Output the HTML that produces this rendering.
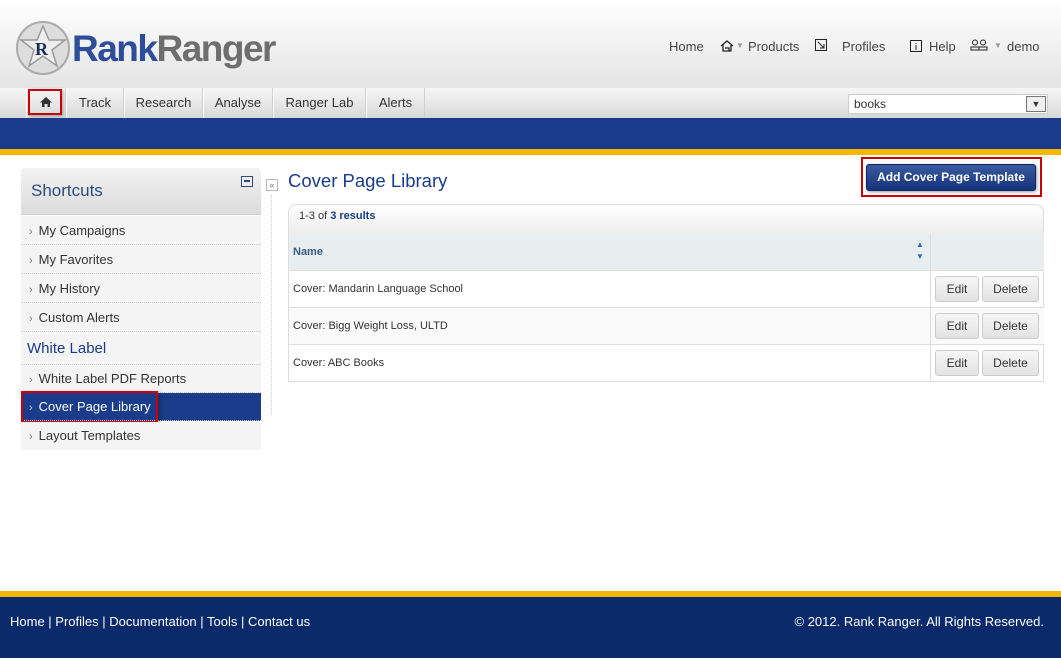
<!DOCTYPE html>
<html><head><style>
*{margin:0;padding:0;box-sizing:border-box}
body{width:1061px;height:658px;position:relative;font-family:"Liberation Sans",sans-serif;background:#fff;overflow:hidden;color:#333}
.abs{position:absolute}
#hdr{left:0;top:0;width:1061px;height:88px;background:linear-gradient(#fff,#e4e4e4)}
#nav{left:0;top:88px;width:1061px;height:30px;background:linear-gradient(#f6f6f6,#d9d9d9)}
.tab{position:absolute;top:0;height:30px;border-left:1px solid #fff;border-right:1px solid #d0d0d0;font-size:13px;color:#333;text-align:center;line-height:29px}
#blue{left:0;top:118px;width:1061px;height:31px;background:#1a3c8a}
#yel{left:0;top:149px;width:1061px;height:6px;background:#f7b700}
.toplink{position:absolute;top:39px;font-size:13px;color:#444;white-space:nowrap}
.side{position:absolute;left:21px;width:240px;background:#f4f4f4;border-bottom:1px dotted #ccc;font-size:13px;color:#333}
.side span.ar{color:#777;font-size:11px;margin:0 6px 0 8px}
.row{position:absolute;left:289px;width:755px;border-bottom:1px solid #ddd;font-size:11px;color:#333}
.btn{position:absolute;height:26px;border:1px solid #ccc;border-radius:3px;background:linear-gradient(#f6f6f6,#e3e3e3);font-size:12px;color:#333;text-align:center;line-height:24px}
#foot{left:0;top:597px;width:1061px;height:61px;background:#0a2a6b;color:#fff;font-size:13px}
</style></head><body>
<div id="hdr" class="abs"></div>
<svg class="abs" style="left:15px;top:20px" width="56" height="56" viewBox="0 0 56 56">
<circle cx="28" cy="28" r="26" fill="#ddd" stroke="#aaa" stroke-width="2"/>
<polygon points="28,6 34,20 50,20 37,30 42,46 28,36 14,46 19,30 6,20 22,20" fill="#eee" stroke="#999" stroke-width="1.5"/>
<text x="20" y="35" font-family="Liberation Serif" font-weight="bold" font-size="18" fill="#1a2a5a">R</text></svg>
<div class="abs" style="left:72px;top:25px;font-family:'Liberation Sans',sans-serif;font-size:37px;font-weight:bold;letter-spacing:-1.5px;line-height:48px"><span style="color:#2d4c9a">Rank</span><span style="color:#6e6e6e">Ranger</span></div>
<div class="toplink" style="left:669px">Home</div>
<svg class="abs" style="left:720px;top:40px" width="14" height="12" viewBox="0 0 14 12"><path d="M1 6 L7 1 L13 6 M3 5 V11 H11 V5 M5 8 H9 V11" fill="none" stroke="#222" stroke-width="1.3"/></svg>
<div class="toplink" style="left:736px;top:41px;color:#999;font-size:8px">▼</div>
<div class="toplink" style="left:748px">Products</div>
<svg class="abs" style="left:815px;top:39px" width="12" height="12"><rect x="0.5" y="0.5" width="11" height="11" fill="none" stroke="#222"/><path d="M3 3 L9 9 M9 5 V9 H5" fill="none" stroke="#222"/></svg>
<div class="toplink" style="left:842px">Profiles</div>
<svg class="abs" style="left:910px;top:40px" width="12" height="12"><rect x="0.5" y="0.5" width="11" height="11" fill="none" stroke="#222"/><path d="M6 3 V4 M6 5 V10" stroke="#222"/></svg>
<div class="toplink" style="left:929px">Help</div>
<svg class="abs" style="left:970px;top:39px" width="18" height="12"><circle cx="5" cy="3.5" r="2.5" fill="none" stroke="#222"/><circle cx="13" cy="3.5" r="2.5" fill="none" stroke="#222"/><path d="M1 11 V8 H9 V11 Z M9 11 V8 H17 V11 Z" fill="none" stroke="#222"/></svg>
<div class="toplink" style="left:994px;top:41px;color:#999;font-size:8px">▼</div>
<div class="toplink" style="left:1007px">demo</div>
<div id="nav" class="abs">
<div class="tab" style="left:26px;width:40px"><div style="position:absolute;left:1px;top:1px;width:34px;height:26px;border:2px solid #c00;box-shadow:1px 1px 3px rgba(0,0,0,.3)"><svg style="position:absolute;left:10px;top:5px" width="12" height="12" viewBox="0 0 12 12"><path d="M6 1 L12 6.5 H10 V11 H7.5 V8 H4.5 V11 H2 V6.5 H0 Z" fill="#333"/></svg></div></div>
<div class="tab" style="left:66px;width:58px">Track</div>
<div class="tab" style="left:124px;width:79px">Research</div>
<div class="tab" style="left:203px;width:70px">Analyse</div>
<div class="tab" style="left:273px;width:93px">Ranger Lab</div>
<div class="tab" style="left:366px;width:59px">Alerts</div>
<div style="position:absolute;left:848px;top:6px;width:200px;height:20px;background:#fff;border:1px solid #ccc;font-size:12px;line-height:18px;padding-left:5px;color:#333">books<div style="position:absolute;right:1px;top:1px;width:20px;height:16px;border:1px solid #777;background:#eee;font-size:9px;text-align:center;line-height:14px">▼</div></div>
</div>
<div id="blue" class="abs"></div><div id="yel" class="abs"></div>

<div class="abs" style="left:21px;top:168px;width:240px;height:47px;background:linear-gradient(#f2f2f2,#dcdcdc);border-bottom:1px solid #ccc;border-radius:4px 4px 0 0;font-size:17px;color:#2d4c7a;padding:13px 10px">Shortcuts<div style="position:absolute;right:8px;top:8px;width:12px;height:11px;border:1.5px solid #2d4c7a;"><div style="margin:3px 2px;height:1.5px;background:#2d4c7a"></div></div></div>
<div class="side" style="top:216px;height:29px;line-height:29px"><span class="ar">›</span>My Campaigns</div>
<div class="side" style="top:245px;height:29px;line-height:29px"><span class="ar">›</span>My Favorites</div>
<div class="side" style="top:274px;height:29px;line-height:29px"><span class="ar">›</span>My History</div>
<div class="side" style="top:303px;height:29px;line-height:29px"><span class="ar">›</span>Custom Alerts</div>
<div class="side" style="top:332px;height:33px;line-height:33px;font-size:15px;color:#1a3c8a;padding-left:6px">White Label</div>
<div class="side" style="top:365px;height:28px;line-height:28px"><span class="ar">›</span>White Label PDF Reports</div>
<div class="side" style="top:393px;height:28px;line-height:28px;background:#1a3c8a;color:#fff"><span class="ar" style="color:#ccc">›</span>Cover Page Library</div>
<div class="abs" style="left:21px;top:391px;width:137px;height:32px;border:2px solid #c00;box-shadow:2px 2px 4px rgba(0,0,0,.3)"></div>
<div class="side" style="top:422px;height:28px;line-height:28px;border:none"><span class="ar">›</span>Layout Templates</div>
<div class="abs" style="left:266px;top:179px;width:12px;height:12px;border:1px solid #bbb;font-size:9px;line-height:10px;color:#777;text-align:center">«</div>
<div class="abs" style="left:271px;top:195px;height:220px;border-left:1px dotted #ccc"></div>

<div class="abs" style="left:288px;top:170px;font-size:18.5px;color:#1a3c8a">Cover Page Library</div>
<div class="abs" style="left:861px;top:157px;width:181px;height:40px;border:2px solid #c00"></div>
<div class="abs" style="left:866px;top:164px;width:170px;height:27px;background:linear-gradient(#3a5aa0,#15337a);border:1px solid #0d2560;border-radius:3px;color:#fff;font-size:12px;font-weight:bold;text-align:center;line-height:25px;white-space:nowrap;box-shadow:1px 1px 3px rgba(0,0,0,.4)">Add Cover Page Template</div>

<div class="abs" style="left:288px;top:204px;width:756px;height:178px;border:1px solid #ddd;border-radius:8px 8px 0 0"></div>
<div class="abs" style="left:289px;top:205px;width:754px;height:29px;background:linear-gradient(#fff,#ececec);border-radius:8px 8px 0 0;font-size:11px;padding:5px 10px;color:#333">1-3 of <b style="color:#1a3c8a">3 results</b></div>
<div class="row" style="top:234px;height:37px;background:#e8edf0;line-height:36px;padding-left:4px;font-weight:bold;color:#3a5a80">Name<span style="position:absolute;left:627px;top:5px;font-size:8px;color:#2a6ab0;line-height:12px">▲<br>▼</span></div>
<div class="row" style="top:271px;height:37px;line-height:36px;padding-left:4px">Cover: Mandarin Language School</div>
<div class="row" style="top:308px;height:37px;line-height:36px;padding-left:4px;background:#fafafa">Cover: Bigg Weight Loss, ULTD</div>
<div class="row" style="top:345px;height:37px;line-height:36px;padding-left:4px">Cover: ABC Books</div>
<div class="abs" style="left:930px;top:234px;height:148px;border-left:1px solid #ddd"></div>
<div class="btn" style="left:935px;top:276px;width:44px">Edit</div><div class="btn" style="left:982px;top:276px;width:57px">Delete</div>
<div class="btn" style="left:935px;top:313px;width:44px">Edit</div><div class="btn" style="left:982px;top:313px;width:57px">Delete</div>
<div class="btn" style="left:935px;top:350px;width:44px">Edit</div><div class="btn" style="left:982px;top:350px;width:57px">Delete</div>

<div class="abs" style="left:0;top:591px;width:1061px;height:6px;background:#f7b700"></div>
<div id="foot" class="abs"><div style="position:absolute;left:10px;top:17px">Home | Profiles | Documentation | Tools | Contact us</div><div style="position:absolute;right:17px;top:17px">© 2012. Rank Ranger. All Rights Reserved.</div></div>
</body></html>
